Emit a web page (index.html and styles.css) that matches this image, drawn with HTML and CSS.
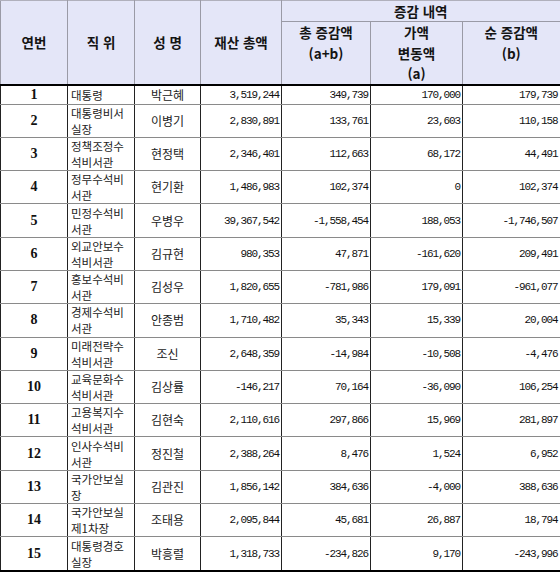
FILE: index.html
```html
<!DOCTYPE html>
<html lang="ko">
<head>
<meta charset="utf-8">
<title>재산 증감 내역</title>
<link rel="stylesheet" href="styles.css">
</head>
<body>
<table class="assets">
  <colgroup>
    <col class="c-no"><col class="c-pos"><col class="c-name"><col class="c-total">
    <col class="c-sum"><col class="c-val"><col class="c-net">
  </colgroup>
  <thead>
    <tr class="h1">
      <th rowspan="2">연번</th>
      <th rowspan="2">직 위</th>
      <th rowspan="2">성 명</th>
      <th rowspan="2">재산 총액</th>
      <th colspan="3" class="group">증감 내역</th>
    </tr>
    <tr class="h2">
      <th class="sub">총 증감액<br>(a+b)</th>
      <th class="sub">가액<br>변동액<br>(a)</th>
      <th class="sub last">순 증감액<br>(b)</th>
    </tr>
  </thead>
  <tbody>
    <tr class="first"><td class="no">1</td><td class="pos">대통령</td><td class="name">박근혜</td><td class="num">3,519,244</td><td class="num">349,739</td><td class="num">170,000</td><td class="num">179,739</td></tr>
    <tr><td class="no">2</td><td class="pos">대통령비서실장</td><td class="name">이병기</td><td class="num">2,830,891</td><td class="num">133,761</td><td class="num">23,603</td><td class="num">110,158</td></tr>
    <tr><td class="no">3</td><td class="pos">정책조정수석비서관</td><td class="name">현정택</td><td class="num">2,346,401</td><td class="num">112,663</td><td class="num">68,172</td><td class="num">44,491</td></tr>
    <tr><td class="no">4</td><td class="pos">정무수석비서관</td><td class="name">현기환</td><td class="num">1,486,983</td><td class="num">102,374</td><td class="num">0</td><td class="num">102,374</td></tr>
    <tr><td class="no">5</td><td class="pos">민정수석비서관</td><td class="name">우병우</td><td class="num">39,367,542</td><td class="num">-1,558,454</td><td class="num">188,053</td><td class="num">-1,746,507</td></tr>
    <tr><td class="no">6</td><td class="pos">외교안보수석비서관</td><td class="name">김규현</td><td class="num">980,353</td><td class="num">47,871</td><td class="num">-161,620</td><td class="num">209,491</td></tr>
    <tr><td class="no">7</td><td class="pos">홍보수석비서관</td><td class="name">김성우</td><td class="num">1,820,655</td><td class="num">-781,986</td><td class="num">179,091</td><td class="num">-961,077</td></tr>
    <tr><td class="no">8</td><td class="pos">경제수석비서관</td><td class="name">안종범</td><td class="num">1,710,482</td><td class="num">35,343</td><td class="num">15,339</td><td class="num">20,004</td></tr>
    <tr><td class="no">9</td><td class="pos">미래전략수석비서관</td><td class="name">조신</td><td class="num">2,648,359</td><td class="num">-14,984</td><td class="num">-10,508</td><td class="num">-4,476</td></tr>
    <tr><td class="no">10</td><td class="pos">교육문화수석비서관</td><td class="name">김상률</td><td class="num">-146,217</td><td class="num">70,164</td><td class="num">-36,090</td><td class="num">106,254</td></tr>
    <tr><td class="no">11</td><td class="pos">고용복지수석비서관</td><td class="name">김현숙</td><td class="num">2,110,616</td><td class="num">297,866</td><td class="num">15,969</td><td class="num">281,897</td></tr>
    <tr><td class="no">12</td><td class="pos">인사수석비서관</td><td class="name">정진철</td><td class="num">2,388,264</td><td class="num">8,476</td><td class="num">1,524</td><td class="num">6,952</td></tr>
    <tr><td class="no">13</td><td class="pos">국가안보실장</td><td class="name">김관진</td><td class="num">1,856,142</td><td class="num">384,636</td><td class="num">-4,000</td><td class="num">388,636</td></tr>
    <tr><td class="no">14</td><td class="pos">국가안보실제1차장</td><td class="name">조태용</td><td class="num">2,095,844</td><td class="num">45,681</td><td class="num">26,887</td><td class="num">18,794</td></tr>
    <tr><td class="no">15</td><td class="pos">대통령경호실장</td><td class="name">박흥렬</td><td class="num">1,318,733</td><td class="num">-234,826</td><td class="num">9,170</td><td class="num">-243,996</td></tr>
  </tbody>
</table>
</body>
</html>
```

FILE: styles.css
```css
html, body {
  margin: 0;
  padding: 0;
  background: #ffffff;
}

.assets {
  border-collapse: collapse;
  table-layout: fixed;
  width: 560px;
  font-family: "Noto Sans CJK KR", "Noto Sans", sans-serif;
  color: #1a1a1a;
  border-left: 1px solid #333;
  border-right: 2px solid #000;
  border-bottom: 2px solid #000;
}

.c-no { width: 67px; }
.c-pos { width: 67px; }
.c-name { width: 66px; }
.c-total { width: 81px; }
.c-sum { width: 89px; }
.c-val { width: 92px; }
.c-net { width: 98px; }

.assets th {
  background: #e4e6f8;
  font-size: 13.5px;
  font-weight: 700;
  color: #141414;
  text-align: center;
  vertical-align: middle;
  border: 1px solid #9a9aa6;
  padding: 0;
  line-height: 20px;
}

.assets thead .h1 th {
  border-top: 1px solid #b0b0bc;
}

.assets thead .h1 th[rowspan] {
  border-bottom: 2px solid #000;
}

.assets th.group {
  height: 20px;
}

.assets th.sub {
  vertical-align: top;
  border-bottom: 2px solid #000;
  height: 59px;
  line-height: 20.5px;
  padding-top: 0;
}

.assets td {
  border-top: 1px solid #8a8a8a;
  border-bottom: 1px solid #8a8a8a;
  border-left: 1px solid #222;
  border-right: 1px solid #222;
  padding: 0;
  height: 32.3px;
  vertical-align: middle;
}

.assets tbody tr.first td {
  height: 18px;
}

.assets td.no {
  font-family: "Liberation Serif", serif;
  font-weight: 700;
  font-size: 14px;
  line-height: 16px;
  text-align: center;
  color: #111;
}

.assets td.pos {
  font-size: 11.5px;
  line-height: 16px;
  text-align: left;
  padding-left: 3px;
  word-break: break-all;
  color: #222;
}

.assets td.name {
  font-size: 12px;
  line-height: 16px;
  text-align: center;
  color: #222;
}

.assets td.num {
  font-family: "Liberation Mono", monospace;
  font-size: 11px;
  line-height: 16px;
  letter-spacing: -1.1px;
  text-align: right;
  padding-right: 2px;
  color: #111;
}
```
